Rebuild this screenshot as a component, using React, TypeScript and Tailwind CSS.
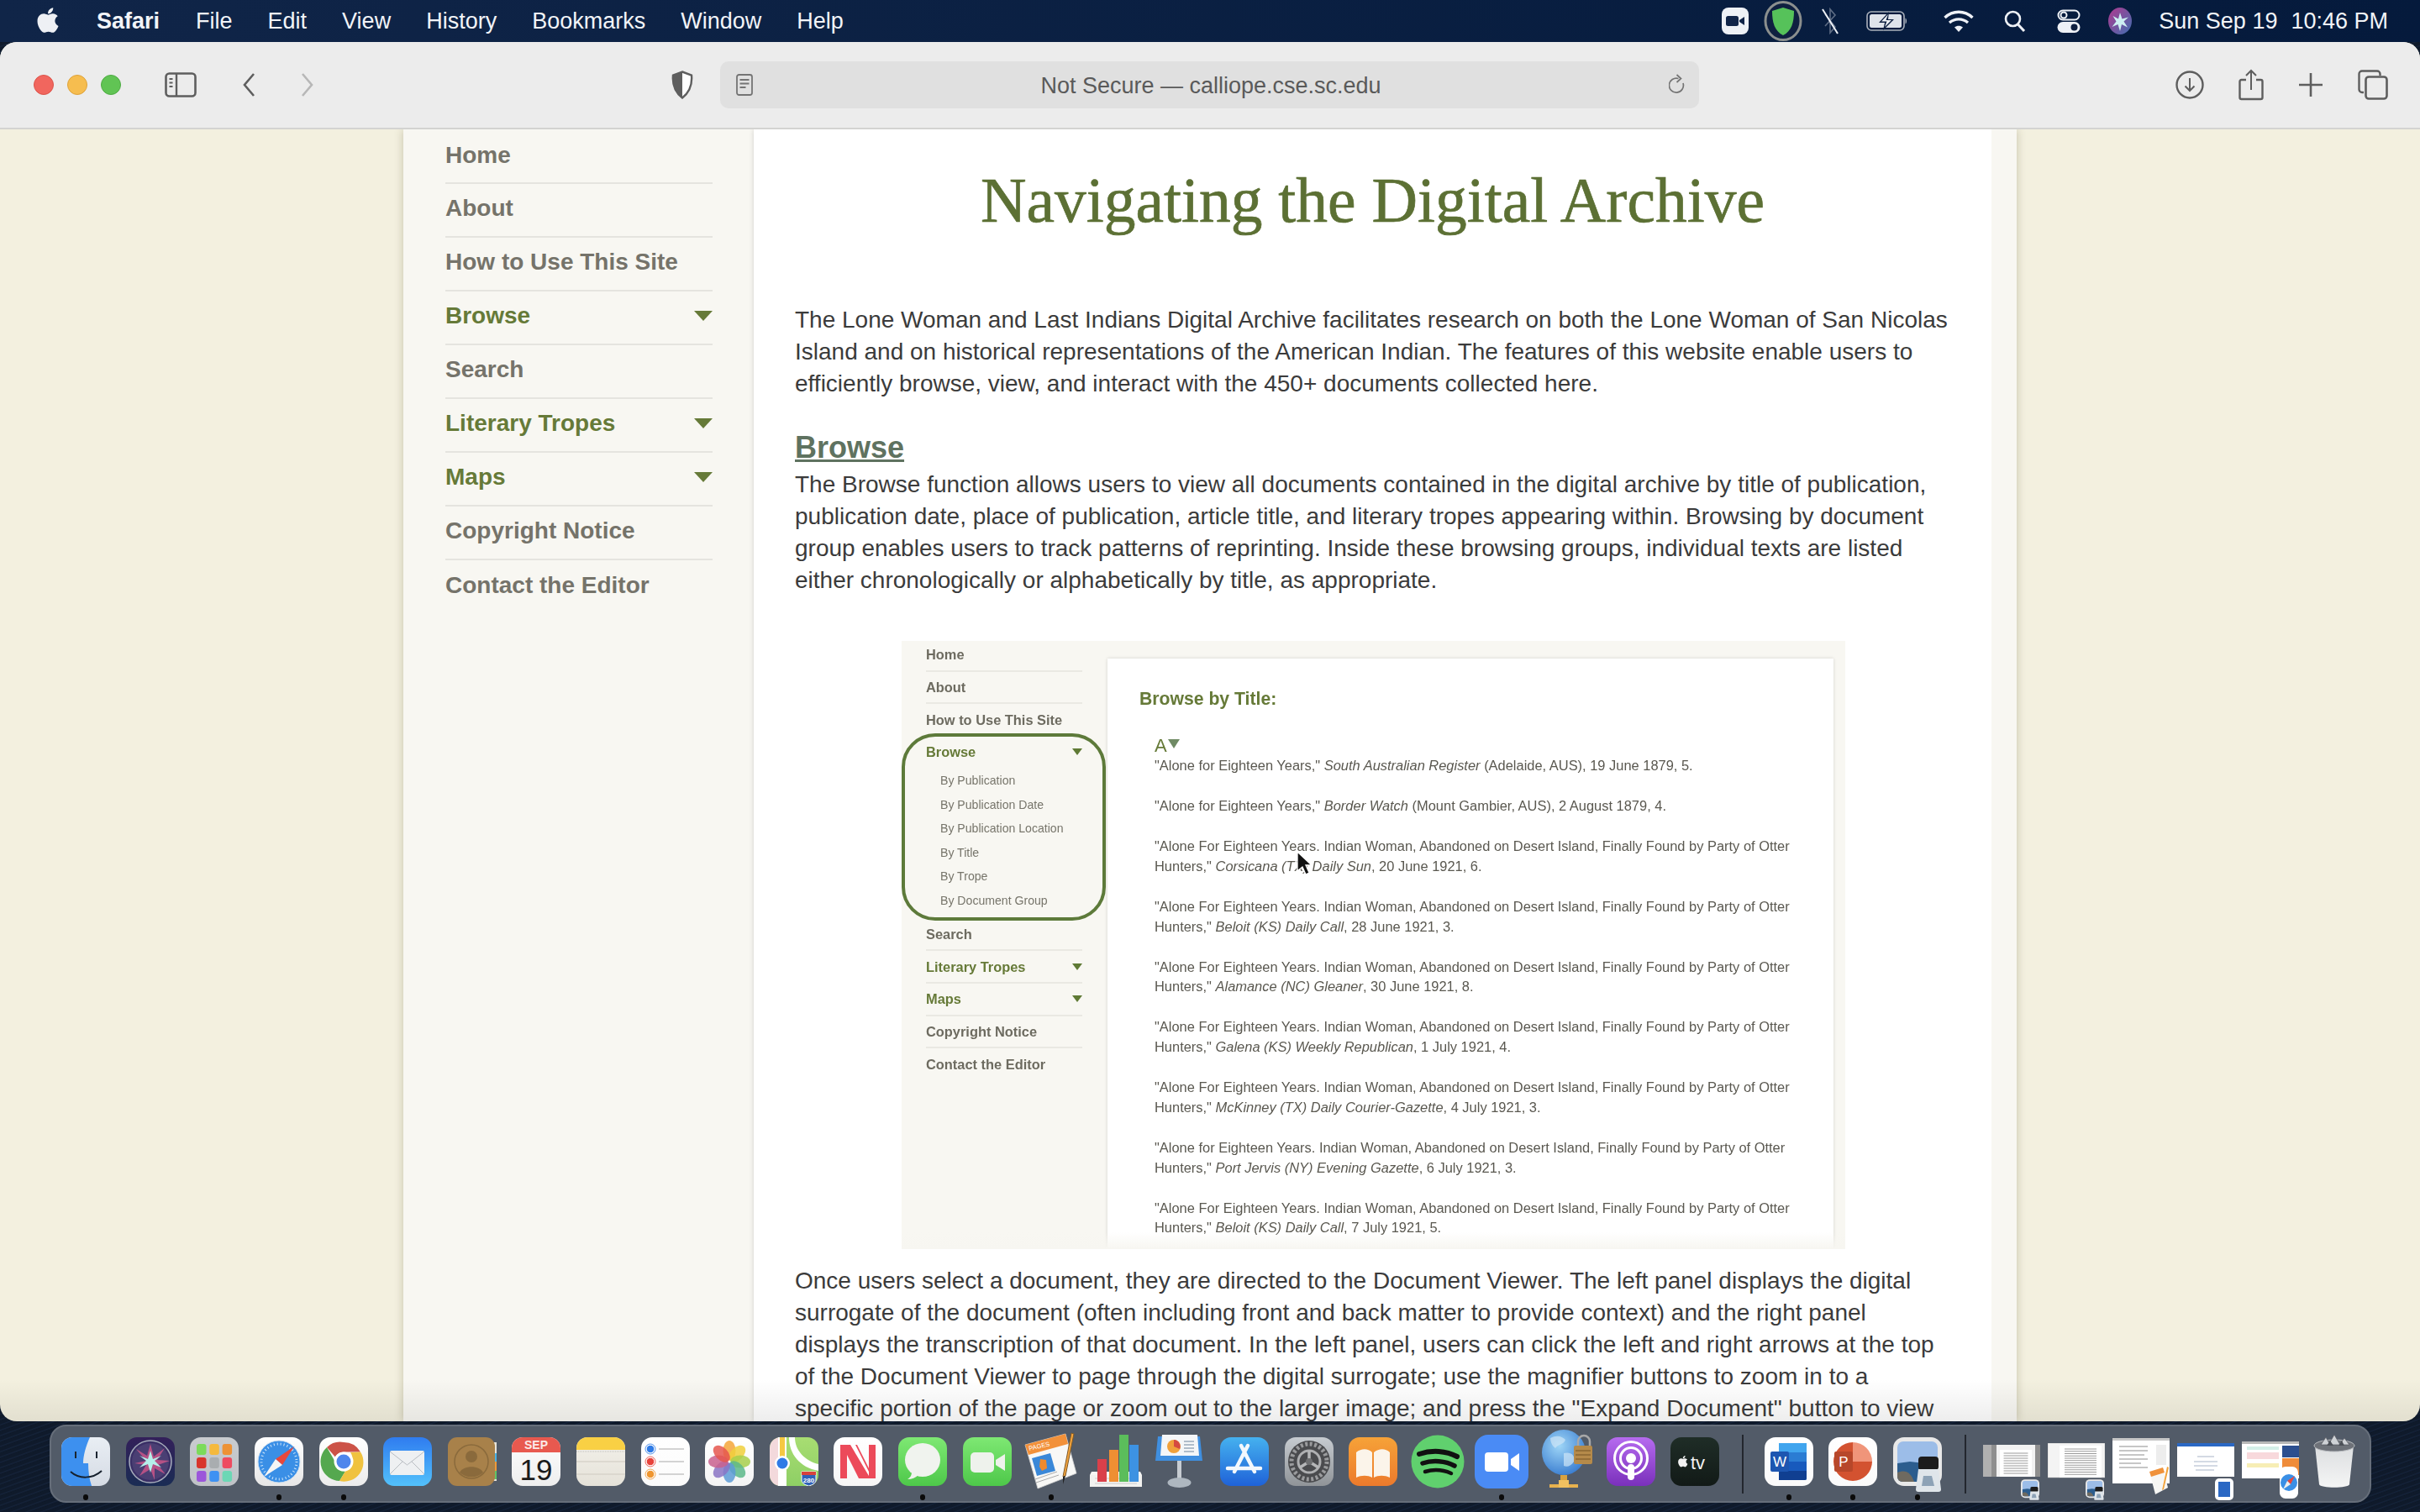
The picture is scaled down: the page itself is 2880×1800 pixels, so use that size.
import { ReactNode } from "react";
import { FaApple } from "react-icons/fa";

const MENU_ITEMS = ["File", "Edit", "View", "History", "Bookmarks", "Window", "Help"];

const NAV_ITEMS = [
  { label: "Home" },
  { label: "About" },
  { label: "How to Use This Site" },
  { label: "Browse", open: true },
  { label: "Search" },
  { label: "Literary Tropes", open: true },
  { label: "Maps", open: true },
  { label: "Copyright Notice" },
  { label: "Contact the Editor" },
];

const SUB_ITEMS = ["By Publication", "By Publication Date", "By Publication Location", "By Title", "By Trope", "By Document Group"];

const SHOT_ITEMS: { a: string; title: string; b: string; one?: boolean }[] = [
  { a: '"Alone for Eighteen Years,"', title: "South Australian Register", b: "(Adelaide, AUS), 19 June 1879, 5.", one: true },
  { a: '"Alone for Eighteen Years,"', title: "Border Watch", b: "(Mount Gambier, AUS), 2 August 1879, 4.", one: true },
  { a: '"Alone For Eighteen Years. Indian Woman, Abandoned on Desert Island, Finally Found by Party of Otter', title: "Corsicana (TX) Daily Sun", b: ", 20 June 1921, 6." },
  { a: '"Alone For Eighteen Years. Indian Woman, Abandoned on Desert Island, Finally Found by Party of Otter', title: "Beloit (KS) Daily Call", b: ", 28 June 1921, 3." },
  { a: '"Alone For Eighteen Years. Indian Woman, Abandoned on Desert Island, Finally Found by Party of Otter', title: "Alamance (NC) Gleaner", b: ", 30 June 1921, 8." },
  { a: '"Alone For Eighteen Years. Indian Woman, Abandoned on Desert Island, Finally Found by Party of Otter', title: "Galena (KS) Weekly Republican", b: ", 1 July 1921, 4." },
  { a: '"Alone For Eighteen Years. Indian Woman, Abandoned on Desert Island, Finally Found by Party of Otter', title: "McKinney (TX) Daily Courier-Gazette", b: ", 4 July 1921, 3." },
  { a: '"Alone for Eighteen Years. Indian Woman, Abandoned on Desert Island, Finally Found by Party of Otter', title: "Port Jervis (NY) Evening Gazette", b: ", 6 July 1921, 3." },
  { a: '"Alone For Eighteen Years. Indian Woman, Abandoned on Desert Island, Finally Found by Party of Otter', title: "Beloit (KS) Daily Call", b: ", 7 July 1921, 5." },
];

const Ico = ({ w, h, vb, className, children }: { w: number; h: number; vb?: string; className?: string; children: ReactNode }) => (
  <svg width={w} height={h} viewBox={vb ?? `0 0 ${w} ${h}`} fill="none" className={`shrink-0 ${className ?? ""}`}>
    {children}
  </svg>
);

const StatusIcons = () => (
  <div className="flex items-center h-full">
    {/* zoom */}
    <Ico w={32} h={32}>
      <rect width="32" height="32" rx="8" fill="#eef1f6" />
      <rect x="5" y="10" width="15" height="12" rx="2.5" fill="#102448" />
      <path d="M21 15l6-4v10l-6-4z" fill="#102448" />
    </Ico>
    {/* green shield */}
    <Ico w={46} h={48} className="ml-[18px]">
      <ellipse cx="23" cy="24" rx="21" ry="22.5" fill="#0f2040" stroke="#8b8f8e" strokeWidth="3" />
      <path d="M23 8l13 4c0 14-3 24-13 29C13 36 10 26 10 12z" fill="#56c25a" />
    </Ico>
    {/* bluetooth off */}
    <Ico w={24} h={34} className="ml-[21px]">
      <path d="M6 9l12 15-6 7V3l6 7-12 13" stroke="#5f6d85" strokeWidth="1.6" />
      <path d="M3 3l18 29" stroke="#eef1f6" strokeWidth="2" />
    </Ico>
    {/* battery */}
    <Ico w={50} h={24} className="ml-[31px]">
      <rect x="1" y="1" width="44" height="22" rx="5" stroke="#aab0bb" strokeWidth="1.6" />
      <rect x="4" y="4" width="38" height="16" rx="2.5" fill="#dfe3ea" />
      <path d="M46.500 8.500c2 1 2 6 0 7z" fill="#aab0bb" />
      <path d="M27 1L15 14h7l-2 9 13-13h-7z" fill="#0f2040" />
      <path d="M26 4l-8 8.500h6.500L22 19l8-8h-6.500z" fill="#eef1f6" />
    </Ico>
    {/* wifi */}
    <Ico w={36} h={26} className="ml-[42px]">
      <path d="M1.500 9C11 0 25 0 34.500 9" stroke="#eef1f6" strokeWidth="3.4" />
      <path d="M7 15c6.500-5.500 15.500-5.500 22 0" stroke="#eef1f6" strokeWidth="3.4" />
      <path d="M13 20.500c3-2.500 7-2.500 10 0L18 26z" fill="#eef1f6" />
    </Ico>
    {/* search */}
    <Ico w={26} h={26} className="ml-[36px]">
      <circle cx="10.500" cy="10.500" r="8.500" stroke="#eef1f6" strokeWidth="2.6" />
      <path d="M16.500 17l7.500 8" stroke="#eef1f6" strokeWidth="3" />
    </Ico>
    {/* control center */}
    <Ico w={28} h={28} className="ml-[37px]">
      <rect x="1.500" y="1.500" width="25" height="11" rx="5.500" stroke="#eef1f6" strokeWidth="2" />
      <circle cx="8" cy="7" r="3.500" stroke="#eef1f6" strokeWidth="2" />
      <rect x="0.500" y="15" width="27" height="13" rx="6.500" fill="#eef1f6" />
      <circle cx="20.500" cy="21.500" r="4" fill="#0f2040" />
    </Ico>
    {/* siri */}
    <Ico w={28} h={34} vb="0 -3 28 34" className="ml-[33px]">
      <defs>
        <linearGradient id="siriTop" x1="0" y1="0" x2="1" y2="1">
          <stop offset="0" stopColor="#b0398f" />
          <stop offset="1" stopColor="#3f6fb0" />
        </linearGradient>
      </defs>
      <ellipse cx="14" cy="14" rx="14" ry="16" fill="url(#siriTop)" />
      <path d="M14 4l2.500 7.500 7.500-2-5.500 5 4.500 7-7-3.500L14 26l-2.500-8-7 3 5-6.500-4-6.500 6.500 3.500z" fill="#cdeff2" />
    </Ico>
    <span className="ml-[32px] text-[#f2f4f8] text-[27px]">Sun Sep 19</span>
    <span className="ml-[16px] text-[#f2f4f8] text-[27px]">10:46 PM</span>
  </div>
);

const MenuBar = () => (
  <div className="h-[50px] shrink-0 flex items-center justify-between bg-gradient-to-r from-[#102548] to-[#051a3c] pl-[42px] pr-[38px]">
    <div className="flex items-center">
      <FaApple className="text-[#eef0f4] w-[30px] h-[34px] mb-[3px]" />
      <span className="ml-[43px] text-[#f2f4f8] text-[27px] font-bold">Safari</span>
      <div className="ml-[43px] flex gap-[42px] text-[#f2f4f8] text-[27px]">
        {MENU_ITEMS.map((m) => (
          <span key={m}>{m}</span>
        ))}
      </div>
    </div>
    <StatusIcons />
  </div>
);

const Toolbar = () => (
  <div className="h-[104px] shrink-0 flex items-center bg-[#ececec] border-b-2 border-[#d3d3d1] pl-[40px] pr-[38px]">
    <div className="flex gap-[16px]">
      <div className="w-[24px] h-[24px] rounded-full bg-[#f1665e] border border-[#dc5249]" />
      <div className="w-[24px] h-[24px] rounded-full bg-[#f6bd4f] border border-[#dea23a]" />
      <div className="w-[24px] h-[24px] rounded-full bg-[#61c454] border border-[#4dab42]" />
    </div>
    <Ico w={38} h={30} className="ml-[52px]">
      <rect x="1.500" y="1.500" width="35" height="27" rx="4" stroke="#5e5e5e" strokeWidth="2.600" />
      <path d="M14 2v26" stroke="#5e5e5e" strokeWidth="2.400" />
      <path d="M5.500 8h4M5.500 12.500h4M5.500 17h4" stroke="#5e5e5e" strokeWidth="2" />
    </Ico>
    <Ico w={16} h={30} className="ml-[54px]">
      <path d="M14 2L3 15l11 13" stroke="#5e5e5e" strokeWidth="2.600" />
    </Ico>
    <Ico w={16} h={30} className="ml-[54px]">
      <path d="M2 2l11 13L2 28" stroke="#b7b7b7" strokeWidth="2.600" />
    </Ico>
    <Ico w={26} h={34} className="ml-[425px]">
      <path d="M13 1.500l11 4c1 11-2 20-11 27C4 25.500 1 16.500 2 5.500z" fill="#fff" stroke="#5e5e5e" strokeWidth="2.400" />
      <path d="M13 1.500L2 5.500C1 16.500 4 25.500 13 32.500z" fill="#5e5e5e" />
    </Ico>
    <div className="ml-[32px] w-[1166px] h-[56px] rounded-[10px] bg-[#e0e0e0] flex items-center pl-[19px] pr-[14px]">
      <Ico w={20} h={26}>
        <rect x="1" y="1" width="18" height="24" rx="2.500" stroke="#747474" strokeWidth="1.800" />
        <path d="M4.500 7h11M4.500 11.500h11M4.500 16h7" stroke="#747474" strokeWidth="2" />
      </Ico>
      <span className="flex-1 text-center text-[27px] pt-[2px] text-[#5a5a5a]">Not Secure — calliope.cse.sc.edu</span>
      <Ico w={22} h={26}>
        <path d="M17 11a8.500 8.500 0 1 1-5.500-5.500" stroke="#747474" strokeWidth="1.700" />
        <path d="M9.500 1l5 4.500-5 4.500" stroke="#747474" strokeWidth="1.700" />
      </Ico>
    </div>
    <Ico w={34} h={34} className="ml-[567px]">
      <circle cx="17" cy="17" r="15.500" stroke="#5e5e5e" strokeWidth="2.400" />
      <path d="M17 9v15M11.500 18.500L17 24l5.500-5.500" stroke="#5e5e5e" strokeWidth="2" />
    </Ico>
    <Ico w={30} h={38} className="ml-[41px]">
      <path d="M9 13H3.500a2 2 0 0 0-2 2v19a2 2 0 0 0 2 2h23a2 2 0 0 0 2-2V15a2 2 0 0 0-2-2H21" stroke="#5e5e5e" strokeWidth="2.400" />
      <path d="M15 25V2M9 8l6-6 6 6" stroke="#5e5e5e" strokeWidth="2" />
    </Ico>
    <Ico w={28} h={28} className="ml-[42px]">
      <path d="M14 0v28M0 14h28" stroke="#5e5e5e" strokeWidth="2.600" />
    </Ico>
    <Ico w={36} h={36} className="ml-[42px]">
      <path d="M7 27H5a3.500 3.500 0 0 1-3.500-3.500V5A3.500 3.500 0 0 1 5 1.500h18A3.500 3.500 0 0 1 26.500 5v2" stroke="#5e5e5e" strokeWidth="2.400" />
      <rect x="9.500" y="8.500" width="25" height="26" rx="3.500" stroke="#5e5e5e" strokeWidth="2.600" />
    </Ico>
  </div>
);

const NavArrow = ({ large }: { large?: boolean }) =>
  large ? (
    <Ico w={22} h={12}>
      <path d="M0 0h22L11 12z" fill="#667a38" />
    </Ico>
  ) : (
    <Ico w={12} h={8}>
      <path d="M0 0h12L6 8z" fill="#5f7a35" />
    </Ico>
  );

const Sidebar = () => (
  <aside className="w-[417px] shrink-0 bg-[#f8f7f2] pl-[50px] pt-[3px]">
    <ul className="w-[318px]">
      {NAV_ITEMS.map((item, i) => (
        <li
          key={item.label}
          className={`h-[64px] flex items-center justify-between pb-[4px] first:h-[62px] text-[28px] font-bold ${
            i < NAV_ITEMS.length - 1 ? "border-b-2 border-[#e5e4df]" : ""
          } ${item.open ? "text-[#667a38]" : "text-[#75736a]"}`}
        >
          <span>{item.label}</span>
          {item.open && <NavArrow large />}
        </li>
      ))}
    </ul>
  </aside>
);

const ShotNavRow = ({ label, open, last, pull }: { label: string; open?: boolean; last?: boolean; pull?: boolean }) => (
  <div
    className={`h-[38.6px] flex items-center justify-between w-[186px] text-[16.400px] font-bold ${
      last ? "" : "border-b-2 border-[#eae9e3]"
    } ${pull ? "-mt-[2px]" : ""} ${open ? "text-[#667a38]" : "text-[#6d6b60]"}`}
  >
    <span>{label}</span>
    {open && <NavArrow />}
  </div>
);

const ArchiveShot = () => (
  <div className="relative mt-[53px] ml-[176px] w-[1123px] h-[724px] overflow-hidden bg-[#f8f7f2] flex [filter:blur(0.45px)]">
    <div className="w-[245px] shrink-0 pl-[29px] -mt-[2px]">
      <ShotNavRow label="Home" />
      <ShotNavRow label="About" />
      <ShotNavRow label="How to Use This Site" last />
      <div className="relative -ml-[29px] w-[243px] h-[223px] rounded-[40px] border-[4px] border-[#5d7a3a] pl-[25px] -mt-[4px]">
        <div className="h-[36px] mb-[2px] flex items-center justify-between w-[186px] text-[16.400px] font-bold text-[#667a38]">
          <span>Browse</span>
          <NavArrow />
        </div>
        {SUB_ITEMS.map((s) => (
          <div key={s} className="h-[28.600px] ml-[17px] flex items-center text-[14.100px] text-[#77756b]">
            {s}
          </div>
        ))}
      </div>
      <ShotNavRow label="Search" pull />
      <ShotNavRow label="Literary Tropes" open />
      <ShotNavRow label="Maps" open />
      <ShotNavRow label="Copyright Notice" />
      <ShotNavRow label="Contact the Editor" last />
    </div>
    <div className="mt-[21px] w-[864px] h-[720px] bg-white shadow-[0_0_4px_rgba(0,0,0,0.15)] pl-[38px] pt-[36px]">
      <div className="text-[21.200px] leading-[24px] font-bold text-[#667a38]">Browse by Title:</div>
      <div className="ml-[18px] mt-[32px]">
        <div className="text-[22px] leading-[24px] text-[#667a38] flex items-center">
          A
          <Ico w={14} h={11} className="mb-[6px] ml-[1px]">
            <path d="M0 0h14L7 11z" fill="#6f8a64" />
          </Ico>
        </div>
        {SHOT_ITEMS.map((it, i) => (
          <p key={i} className="text-[16.450px] leading-[23.800px] text-[#5a5850] whitespace-nowrap mb-[24.200px] first:mt-[4px]">
            {it.a}
            {it.one ? " " : <br />}
            {it.one ? null : 'Hunters," '}
            <em>{it.title}</em>
            {it.one ? " " : ""}
            {it.b}
          </p>
        ))}
      </div>
    </div>
    <Ico w={20} h={30} className="absolute left-[469px] top-[250px]">
      <path d="M2 1v23l6-5 4 9 4-2-4-9h7z" fill="#111" stroke="#fff" strokeWidth="1.300" />
    </Ico>
    <div className="absolute left-0 right-0 bottom-0 h-[20px] bg-gradient-to-b from-transparent to-[#f7f6f1]" />
  </div>
);

const MainPanel = () => (
  <main className="w-[1473px] shrink-0 bg-white shadow-[0_0_6px_rgba(0,0,0,0.16)] text-[#3b3b3b] text-[28px] leading-[38px]">
    <h1 className="pt-[45px] text-center [font-family:'Liberation_Serif',Georgia,serif] text-[75.500px] leading-[80px] text-[#5c7034] [-webkit-text-stroke:0.7px_#5c7034]">
      Navigating the Digital Archive
    </h1>
    <div className="pl-[49px]">
      <p className="mt-[83px] whitespace-nowrap">
        The Lone Woman and Last Indians Digital Archive facilitates research on both the Lone Woman of San Nicolas
        <br />
        Island and on historical representations of the American Indian. The features of this website enable users to
        <br />
        efficiently browse, view, and interact with the 450+ documents collected here.
      </p>
      <h2 className="mt-[35px] text-[36px] leading-[44px] font-bold underline text-[#5f7260]">Browse</h2>
      <p className="mt-[3px] whitespace-nowrap">
        The Browse function allows users to view all documents contained in the digital archive by title of publication,
        <br />
        publication date, place of publication, article title, and literary tropes appearing within. Browsing by document
        <br />
        group enables users to track patterns of reprinting. Inside these browsing groups, individual texts are listed
        <br />
        either chronologically or alphabetically by title, as appropriate.
      </p>
    </div>
    <ArchiveShot />
    <div className="pl-[49px]">
      <p className="mt-[19px] whitespace-nowrap">
        Once users select a document, they are directed to the Document Viewer. The left panel displays the digital
        <br />
        surrogate of the document (often including front and back matter to provide context) and the right panel
        <br />
        displays the transcription of that document. In the left panel, users can click the left and right arrows at the top
        <br />
        of the Document Viewer to page through the digital surrogate; use the magnifier buttons to zoom in to a
        <br />
        specific portion of the page or zoom out to the larger image; and press the "Expand Document" button to view
      </p>
    </div>
  </main>
);

/* dock art */
const Tile = ({ id, from, to, size = 58, r = 13, children }: { id: string; from: string; to: string; size?: number; r?: number; children?: ReactNode }) => (
  <Ico w={size} h={size} vb="0 0 58 58">
    <defs>
      <linearGradient id={id} x1="0" y1="0" x2="0" y2="1">
        <stop offset="0" stopColor={from} />
        <stop offset="1" stopColor={to} />
      </linearGradient>
    </defs>
    <rect width="58" height="58" rx={r} fill={`url(#${id})`} />
    {children}
  </Ico>
);

const PETALS = ["#f4a63a", "#f0cf3c", "#a8cf4b", "#5cb98a", "#5d9bd6", "#8a74c4", "#c9608e", "#e5564e"];

const Finder = () => (
  <Tile id="fd" from="#e9eef4" to="#d5dbe4">
    <path d="M13 0h21c-5 11-8 22-8 31h6c0 9 1 18 4 27H13A13 13 0 0 1 0 45V13A13 13 0 0 1 13 0z" fill="#3d90ef" />
    <path d="M17 17v8M42 17v8" stroke="#1b2530" strokeWidth="2" />
    <path d="M11 41c10 9 26 9 37-1" stroke="#16202c" strokeWidth="2" />
  </Tile>
);
const Siri = () => (
  <Tile id="si" from="#33205a" to="#1a2c54">
    <circle cx="29" cy="29" r="25" fill="#3a2f66" stroke="#a7adbc" strokeWidth="1.500" />
    <circle cx="29" cy="29" r="22" fill="#4a3f73" />
    <path d="M29 8l4 15 13-10-9 14 15 1-14 5 9 11-13-7 0 14-5-13-13 8 8-13-14-2 14-3L12 14l13 8z" fill="#d0568a" opacity="0.8" />
    <path d="M29 16l3 10 10-4-8 6 8 8-10-4-3 10-3-10-10 4 8-8-8-6 10 4z" fill="#b5f0ea" />
  </Tile>
);
const LAUNCH = ["#7cdb5a", "#f5b93d", "#ed9236", "#d8342b", "#a9adb0", "#ee4b60", "#9b56da", "#3e91f2", "#6cd7b5"];
const Launchpad = () => (
  <Tile id="lp" from="#c8cbcf" to="#bfc2c7">
    {LAUNCH.map((c, i) => (
      <rect key={i} x={8 + (i % 3) * 15.300} y={8 + Math.floor(i / 3) * 16} width="11.500" height="13" rx="3" fill={c} />
    ))}
  </Tile>
);
const Safari = () => (
  <Tile id="sf" from="#ffffff" to="#e6e6e6">
    <circle cx="29" cy="29" r="25" fill="#3a8fe6" stroke="#cfe0f0" strokeWidth="1" />
    <circle cx="29" cy="29" r="21" stroke="#cfe6fa" strokeWidth="3" strokeDasharray="1 3" />
    <path d="M47 11L25 26l8 7z" fill="#e8473c" />
    <path d="M11 47l14-21 8 7z" fill="#f5f5f5" />
  </Tile>
);
const Chrome = () => (
  <Tile id="cr" from="#ffffff" to="#ececec">
    <path d="M29 6a23 23 0 0 1 20 11.500H29a11.500 11.500 0 0 0-10 6L9 12A23 23 0 0 1 29 6z" fill="#cc5247" />
    <path d="M9 12l10 17.500A11.500 11.500 0 0 0 31 40.500L24 52A23 23 0 0 1 9 12z" fill="#55a84f" />
    <path d="M49 17.500A23 23 0 0 1 24 52l11-18A11.500 11.500 0 0 0 37 18z" fill="#f0c23f" />
    <circle cx="29" cy="29" r="11.500" fill="#fff" />
    <circle cx="29" cy="29" r="8.500" fill="#4f86ec" />
  </Tile>
);
const Mail = () => (
  <Tile id="ml" from="#2f7cf0" to="#53c1fb">
    <rect x="8" y="16" width="41" height="29" rx="2" fill="#eef0f2" />
    <path d="M8 17l20.500 16L49 17M8 44l15-15M49 44L34 29" stroke="#b9bdc2" strokeWidth="1" />
  </Tile>
);
const Contacts = () => (
  <Ico w={58} h={58}>
    <path d="M54 6h4v46h-4z" fill="#e8e4da" />
    <rect x="54" y="19" width="4" height="10" fill="#4ab4e8" />
    <rect x="54" y="29" width="4" height="11" fill="#ef9a3a" />
    <rect x="54" y="40" width="4" height="10" fill="#62c466" />
    <rect width="56" height="58" rx="11" fill="#a8814a" />
    <circle cx="28" cy="29" r="20" stroke="#8a6a3c" strokeWidth="1.500" />
    <circle cx="28" cy="23" r="7" fill="#8a6a3c" />
    <path d="M14 42c4-9 24-9 28 0-8 7-20 7-28 0z" fill="#8a6a3c" />
  </Ico>
);
const Calendar = () => (
  <Tile id="cl" from="#fdfdfd" to="#eeeeee">
    <path d="M13 0h32a13 13 0 0 1 13 13v5H0v-5A13 13 0 0 1 13 0z" fill="#e8594f" />
    <text x="29" y="14" textAnchor="middle" fontSize="14" fontWeight="700" fill="#fbe9e6" className="[font-family:'Liberation_Sans',sans-serif]">SEP</text>
    <text x="29" y="51" textAnchor="middle" fontSize="35" fill="#1b1b1b" className="[font-family:'Liberation_Sans',sans-serif]">19</text>
  </Tile>
);
const Notes = () => (
  <Tile id="nt" from="#f3f1ea" to="#e5e2d9">
    <path d="M13 0h32a13 13 0 0 1 13 13v2H0v-2A13 13 0 0 1 13 0z" fill="#f9d044" />
    <path d="M0 17h58" stroke="#bbb" strokeWidth="1" strokeDasharray="1 1" />
    <path d="M0 29h58M0 44h58" stroke="#d7d4ca" strokeWidth="1.500" />
  </Tile>
);
const Reminders = () => (
  <Tile id="rm" from="#ffffff" to="#fbfbfb">
    {[
      ["#2f7be6", 14],
      ["#e8423a", 29],
      ["#ef9630", 44],
    ].map(([c, y]) => (
      <g key={c as string}>
        <circle cx="11" cy={y as number} r="4.800" fill={c as string} stroke="#fff" strokeWidth="1" />
        <circle cx="11" cy={y as number} r="6" stroke={c as string} strokeWidth="0.800" />
        <path d={`M21 ${y}h30`} stroke="#bdbdbd" strokeWidth="1.300" />
      </g>
    ))}
  </Tile>
);
const Photos = () => (
  <Tile id="ph" from="#ffffff" to="#f4f4f4">
    {PETALS.map((c, i) => (
      <ellipse key={c} cx="29" cy="16" rx="7.500" ry="12" fill={c} opacity="0.85" transform={`rotate(${i * 45} 29 29)`} />
    ))}
    <circle cx="29" cy="29" r="1.500" fill="#fff" />
  </Tile>
);
const Maps = () => (
  <Tile id="mp" from="#a8dd72" to="#8ecf65">
    <path d="M0 13A13 13 0 0 1 13 0h7v58h-7A13 13 0 0 1 0 45z" fill="#f3d9dc" />
    <path d="M10 0h10v58H10z" fill="#fff" />
    <path d="M12 0h6v25h-6z" fill="#f5c842" />
    <path d="M30 0c0 16 12 28 28 32v8C36 36 23 20 23 0z" fill="#fff" />
    <circle cx="15" cy="31" r="9" fill="#fff" />
    <circle cx="15" cy="31" r="6.500" fill="#2f7be6" />
    <path d="M38 41h17v10c0 4-5 6-8.500 7-3.500-1-8.500-3-8.500-7z" fill="#2f62b8" stroke="#fff" strokeWidth="1" />
    <path d="M38 41h17v4H38z" fill="#d8433c" />
    <text x="46.500" y="54" textAnchor="middle" fontSize="8" fontWeight="700" fill="#fff" className="[font-family:'Liberation_Sans',sans-serif]">280</text>
  </Tile>
);
const News = () => (
  <Tile id="nw" from="#ffffff" to="#f6f6f6">
    <path d="M8 9h8v40H8zM42 9h8v40h-8z" fill="#ec4a5a" />
    <path d="M16 9h12l14 28v12H30L16 21z" fill="#ec4a5a" />
    <path d="M20 9h6l16 32v5z" fill="#fff" />
  </Tile>
);
const Messages = () => (
  <Tile id="ms" from="#7ee873" to="#4ec84a">
    <ellipse cx="29" cy="27" rx="21" ry="20" fill="#f0f3ee" />
    <path d="M16 41c0 5-2 7-5 9 5 0 10-2 13-5z" fill="#f0f3ee" />
  </Tile>
);
const FaceTime = () => (
  <Tile id="ft" from="#7ee873" to="#4ec84a">
    <rect x="9" y="18" width="28" height="24" rx="5" fill="#eef2ec" />
    <path d="M39 27l11-7v20l-11-7z" fill="#eef2ec" />
  </Tile>
);
const Pages = () => (
  <Ico w={66} h={70} className="-mt-[6px]">
    <path d="M2 15L50 2l13 47-46 18z" fill="#f8f8f6" stroke="#cfcfcf" strokeWidth="0.800" />
    <path d="M2 15L50 2l3 12L6 27z" fill="#f2913a" />
    <text x="7" y="22" fontSize="7.500" fill="#fff" transform="rotate(-13 7 22)" className="[font-family:'Liberation_Sans',sans-serif]">PAGES</text>
    <path d="M10 31l22-6 6 21-22 6z" fill="#3a88d8" />
    <path d="M20 32l7 1 1 10-6 3-3-5z" fill="#ef8a2e" />
    <path d="M14 56l26-9M15 60l27-9" stroke="#aaa" strokeWidth="1" />
    <path d="M57 1l3 1-10 50-3 1z" fill="#f2a33c" stroke="#7d5a2a" strokeWidth="1" />
    <path d="M47 53l3-1-3 10z" fill="#222" />
  </Ico>
);
const Numbers = () => (
  <Ico w={62} h={66} className="-mt-[5px]">
    <path d="M0 50l2-4h58l2 4v14H0z" fill="#f7f7f5" />
    <path d="M0 50h62v14H0z" fill="#f2f2f0" />
    <path d="M6 54h50M6 60h50" stroke="#cdcdcd" strokeWidth="1" />
    <rect x="9" y="31" width="11" height="27" fill="#d9404a" />
    <rect x="23" y="20" width="11" height="38" fill="#ef8f33" />
    <rect x="35" y="2" width="11" height="56" fill="#5bbd5b" />
    <rect x="47" y="14" width="11" height="44" fill="#3d92e2" />
  </Ico>
);
const Keynote = () => (
  <Ico w={58} h={68} className="-mt-[6px]">
    <path d="M3 5h50l3 29H0z" fill="#3f8fe0" />
    <path d="M8 3h42l2 25H6z" fill="#f4f6f8" />
    <circle cx="22" cy="17" r="8" fill="#f0a13c" />
    <path d="M22 17V9a8 8 0 0 1 7 11z" fill="#d54a42" />
    <path d="M34 11h12M34 15h12M34 19h12M34 23h12" stroke="#9ab" strokeWidth="1.500" />
    <rect x="26" y="34" width="5" height="24" fill="#c7ccd2" />
    <ellipse cx="28.500" cy="60" rx="14" ry="6" fill="#aeb7c0" />
  </Ico>
);
const AppStore = () => (
  <Tile id="as" from="#45b1ef" to="#1f62d8">
    <path d="M33 10L17 41M25 10l16 31" stroke="#f3f8fd" strokeWidth="4.500" strokeLinecap="round" />
    <path d="M9 37h39" stroke="#f3f8fd" strokeWidth="4.500" strokeLinecap="round" />
  </Tile>
);
const SystemPrefs = () => (
  <Tile id="sp" from="#c6cbd0" to="#909498">
    <circle cx="29" cy="29" r="25" fill="#4a4b4e" />
    <circle cx="29" cy="29" r="21" stroke="#9a9b9d" strokeWidth="5" strokeDasharray="3 2.500" />
    <circle cx="29" cy="29" r="13" stroke="#aeafb1" strokeWidth="3" />
    <path d="M29 29V16M29 29l11 7M29 29l-11 7" stroke="#b5b6b8" strokeWidth="3.500" />
    <circle cx="29" cy="29" r="4" fill="#6d6e70" />
  </Tile>
);
const Books = () => (
  <Tile id="bk" from="#f6a238" to="#ec7a2c">
    <path d="M9 18c6-5 14-5 19 0v30c-5-3-13-3-19 0z" fill="#fbf4ea" />
    <path d="M30 18c6-5 14-5 19 0v30c-6-3-14-3-19 0z" fill="#fbf4ea" />
  </Tile>
);
const Spotify = () => (
  <Ico w={64} h={64} className="-mt-[3px]">
    <circle cx="32" cy="32" r="31.500" fill="#60d06e" />
    <path d="M10 23c15-5 32-4 45 3" stroke="#111" strokeWidth="6" strokeLinecap="round" />
    <path d="M14 34c12-4 27-3 38 3" stroke="#111" strokeWidth="5.500" strokeLinecap="round" />
    <path d="M17 44c10-3 22-2 31 2" stroke="#111" strokeWidth="4.500" strokeLinecap="round" />
  </Ico>
);
const ZoomApp = () => (
  <Ico w={64} h={64} className="-mt-[3px]">
    <rect width="64" height="64" rx="16" fill="#4a8bf5" />
    <rect x="12" y="21" width="28" height="23" rx="4" fill="#fff" />
    <path d="M43 29l10-7v21l-10-7z" fill="#fff" />
  </Ico>
);
const Globe = () => (
  <Ico w={66} h={72} className="-mt-[9px]">
    <defs>
      <radialGradient id="gb" cx="0.400" cy="0.350" r="0.800">
        <stop offset="0" stopColor="#9fd6f7" />
        <stop offset="1" stopColor="#2a6fca" />
      </radialGradient>
    </defs>
    <ellipse cx="30" cy="27" rx="26" ry="27" fill="url(#gb)" />
    <path d="M14 10c8-4 14-2 18 2-2 6-9 5-12 10-3-2-6-7-6-12zM30 28c8-2 14 2 12 10-3 5-8 7-12 5z" fill="#cfe6f6" opacity="0.7" />
    <path d="M26 54h8v8h-8z" fill="#d9a23f" />
    <path d="M13 65h34v4H13z" fill="#e8b24e" />
    <path d="M24 60h12v9H24z" fill="#f0c060" />
    <path d="M50 20v-6a7 7 0 0 1 14 0v6" stroke="#a8a8a8" strokeWidth="2.500" transform="translate(-3 0)" />
    <rect x="42" y="19" width="22" height="22" rx="2" fill="#b58a4a" />
    <path d="M44 25h18M44 30h18M44 35h18" stroke="#8b6733" strokeWidth="1.500" />
  </Ico>
);
const Podcasts = () => (
  <Tile id="pc" from="#b66bef" to="#7a30bb">
    <circle cx="29" cy="25" r="19.500" stroke="#fff" strokeWidth="3" />
    <circle cx="29" cy="25" r="12.500" stroke="#fff" strokeWidth="3" />
    <circle cx="29" cy="25" r="6" fill="#fff" />
    <rect x="25" y="32" width="8" height="19" rx="4" fill="#fff" />
  </Tile>
);
const AppleTv = () => (
  <Tile id="tv" from="#1f2d27" to="#121a17">
    <g transform="translate(9 21) scale(0.030)" fill="#f2f2f2">
      <path d="M318.700 268.700c-.2-36.700 16.400-64.400 50-84.800-18.800-26.900-47.200-41.700-84.700-44.600-35.500-2.800-74.300 20.700-88.500 20.700-15 0-49.400-19.700-76.400-19.700C63.300 141.200 4 184.800 4 273.500q0 39.300 14.400 81.200c12.800 36.700 59 126.700 107.200 125.200 25.200-.6 43-17.900 75.800-17.900 31.800 0 48.300 17.900 76.400 17.900 48.600-.7 90.400-82.500 102.600-119.300-65.200-30.700-61.700-90-61.700-91.900zm-56.600-164.200c27.300-32.400 24.800-61.900 24-72.500-24.100 1.400-52 16.400-67.900 34.900-17.500 19.800-27.800 44.300-25.600 71.900 26.100 2 49.900-11.400 69.500-34.300z" />
    </g>
    <text x="24" y="38" fontSize="22" fill="#f2f2f2" className="[font-family:'Liberation_Sans',sans-serif]">tv</text>
  </Tile>
);
const Word = () => (
  <Tile id="wd" from="#ffffff" to="#fafafa">
    <path d="M17 7h31a2 2 0 0 1 2 2v40a2 2 0 0 1-2 2H17z" fill="#2b7cd3" />
    <path d="M17 7h33v11H17z" fill="#41a5ee" />
    <path d="M17 29h33v11H17z" fill="#185abd" />
    <path d="M17 40h33v9a2 2 0 0 1-2 2H17z" fill="#103f91" />
    <rect x="7" y="17" width="22" height="24" rx="2" fill="#1d56b1" />
    <text x="18" y="35" textAnchor="middle" fontSize="17" fill="#fff" className="[font-family:'Liberation_Sans',sans-serif]">W</text>
  </Tile>
);
const Ppt = () => (
  <Tile id="pp" from="#ffffff" to="#fafafa">
    <path d="M29 6a23 23 0 0 1 23 23H29z" fill="#f0957a" />
    <path d="M29 6a23 23 0 0 0 0 46 23 23 0 0 0 23-23H29z" fill="#d35230" />
    <rect x="7" y="17" width="22" height="24" rx="2" fill="#b7472a" />
    <text x="18" y="35" textAnchor="middle" fontSize="17" fill="#fff" className="[font-family:'Liberation_Sans',sans-serif]">P</text>
  </Tile>
);
const PreviewBadge = ({ size }: { size: number }) => (
  <Ico w={size} h={Math.round(size * 1.120)} vb="0 0 58 65">
    <rect width="58" height="58" rx="13" fill="#e8e8e8" />
    <rect x="5" y="5" width="48" height="48" rx="7" fill="#9cbde8" />
    <path d="M5 31l15-2 33 4v14a6 6 0 0 1-6 6H11a6 6 0 0 1-6-6z" fill="#2c5d8e" />
    <path d="M5 42c10-4 16 0 20 11H11a6 6 0 0 1-6-6z" fill="#6f6a60" />
    <rect x="30" y="23" width="24" height="16" rx="4" fill="#1c1c1c" />
    <path d="M30 38h24l3 24a3 3 0 0 1-3 3H30a3 3 0 0 1-3-3z" fill="#dfe5ea" />
    <path d="M36 46l10 0 3 12H34z" fill="#8da2b6" />
  </Ico>
);
const Doc = ({ x, y, w, h, rows = 14 }: { x: number; y: number; w: number; h: number; rows?: number }) => (
  <g>
    <rect x={x} y={y} width={w} height={h} fill="#fff" />
    {Array.from({ length: rows }).map((_, i) => (
      <path key={i} d={`M${x + w * 0.12} ${y + 4 + (i * (h - 5)) / rows}h${w * 0.76}`} stroke="#9a9a9a" strokeWidth="1" />
    ))}
  </g>
);
const Thumb = ({ children, badge, mt = 0 }: { children: ReactNode; badge: ReactNode; mt?: number }) => (
  <div className="relative w-[68px] h-[62px] shrink-0" style={{ marginTop: mt }}>
    <Ico w={68} h={62}>
      {children}
    </Ico>
    <div className="absolute right-[1px] bottom-[-6px] flex">{badge}</div>
  </div>
);
const WordBadge = () => (
  <div className="w-[22px] h-[26px] rounded-[5px] bg-white flex items-center justify-center">
    <div className="w-[14px] h-[18px] bg-[#2b68c4]" />
  </div>
);
const PagesBadge = () => (
  <Ico w={24} h={34} vb="0 0 24 34">
    <path d="M1 6l16-5 6 24-15 8z" fill="#f7f7f4" />
    <path d="M1 6l16-5 2 6L3 12z" fill="#f0923a" />
    <path d="M22 0l2 1-6 26-2 1z" fill="#f2a33c" />
  </Ico>
);
const SafariBadge = () => (
  <Ico w={22} h={38} vb="0 0 22 38">
    <rect width="22" height="38" rx="7" fill="#fff" />
    <circle cx="11" cy="19" r="10" fill="#3a8fe6" />
    <path d="M18 11l-9 6 4 4z" fill="#e8473c" />
    <path d="M4 27l5-10 4 4z" fill="#eee" />
  </Ico>
);

const Trash = () => (
  <Ico w={52} h={66}>
    <defs>
      <linearGradient id="trsh" x1="0" y1="0" x2="0" y2="1">
        <stop offset="0" stopColor="#dcdee0" />
        <stop offset="1" stopColor="#f4f5f5" />
      </linearGradient>
    </defs>
    <path d="M3 14l5 46c1 5 35 5 36 0l5-46z" fill="url(#trsh)" />
    <ellipse cx="26" cy="14" rx="24" ry="7" fill="#6e7279" stroke="#b9bcc0" strokeWidth="1" />
    <path d="M10 13l6-9 5 9zM19 13l7-12 7 12zM32 13l6-8 6 8z" fill="#cfd2d6" stroke="#55585e" strokeWidth="0.700" />
    <path d="M21 8l4 6h-8zM35 8l3 6h-7z" fill="#4c5057" />
  </Ico>
);

const DOCK_APPS = [
  { key: "finder", Icon: Finder, on: true },
  { key: "siri", Icon: Siri },
  { key: "launchpad", Icon: Launchpad },
  { key: "safari", Icon: Safari, on: true },
  { key: "chrome", Icon: Chrome, on: true },
  { key: "mail", Icon: Mail },
  { key: "contacts", Icon: Contacts },
  { key: "calendar", Icon: Calendar },
  { key: "notes", Icon: Notes },
  { key: "reminders", Icon: Reminders },
  { key: "photos", Icon: Photos },
  { key: "maps", Icon: Maps },
  { key: "news", Icon: News },
  { key: "messages", Icon: Messages, on: true },
  { key: "facetime", Icon: FaceTime },
  { key: "pages", Icon: Pages, on: true },
  { key: "numbers", Icon: Numbers },
  { key: "keynote", Icon: Keynote },
  { key: "appstore", Icon: AppStore },
  { key: "prefs", Icon: SystemPrefs },
  { key: "books", Icon: Books },
  { key: "spotify", Icon: Spotify },
  { key: "zoom", Icon: ZoomApp, on: true },
  { key: "globe", Icon: Globe },
  { key: "podcasts", Icon: Podcasts },
  { key: "tv", Icon: AppleTv },
];

const DockSlot = ({ children, on }: { children: ReactNode; on?: boolean }) => (
  <div className="w-[76.600px] shrink-0 flex flex-col items-center pt-[13px]">
    <div className="h-[58px] flex items-start justify-center">{children}</div>
    {on && <div className="mt-[10px] w-[6px] h-[7px] rounded-full bg-[#0b0b0b]" />}
  </div>
);

const Dock = () => (
  <div className="mt-[4px] ml-[59px] w-[2763px] h-[93px] shrink-0 rounded-[20px] bg-[#525b68] border-[2px] border-[#666e7a] flex pl-[3px] box-border">
    {DOCK_APPS.map(({ key, Icon, on }) => (
      <DockSlot key={key} on={on}>
        <Icon />
      </DockSlot>
    ))}
    <div className="ml-[18px] mt-[10px] w-[2px] h-[70px] bg-[#23272e]" />
    <div className="ml-[15px] flex">
      <DockSlot on>
        <Word />
      </DockSlot>
      <DockSlot on>
        <Ppt />
      </DockSlot>
      <DockSlot on>
        <PreviewBadge size={58} />
      </DockSlot>
    </div>
    <div className="ml-[18px] mt-[10px] w-[2px] h-[70px] bg-[#23272e]" />
    <div className="ml-[20px] flex gap-[9px] pt-[20px] h-[62px]">
      <Thumb badge={<PreviewBadge size={22} />}>
        <rect x="0" y="2" width="68" height="38" fill="#f2f2f2" />
        <rect x="0" y="2" width="10" height="38" fill="#b0b0b0" />
        <rect x="10" y="2" width="6" height="38" fill="#8f8f8f" />
        <rect x="62" y="2" width="6" height="38" fill="#8f8f8f" />
        <Doc x={20} y={8} w={38} h={32} rows={9} />
      </Thumb>
      <Thumb badge={<PreviewBadge size={22} />}>
        <rect x="0" y="0" width="68" height="41" fill="#f4f4f4" stroke="#bbb" strokeWidth="0.500" />
        <Doc x={14} y={3} w={50} h={38} rows={12} />
      </Thumb>
      <Thumb badge={<PagesBadge />} mt={-6}>
        <rect x="0" y="0" width="68" height="54" fill="#fff" />
        <rect x="0" y="0" width="68" height="3" fill="#c7c7c7" />
        <path d="M8 10h34M8 15h34M8 20h30M8 25h34M8 30h26M8 35h34" stroke="#8d8d8d" strokeWidth="1" />
        <path d="M52 8h12v24H52z" fill="#ededed" />
      </Thumb>
      <Thumb badge={<WordBadge />}>
        <rect x="0" y="0" width="68" height="40" fill="#fff" />
        <rect x="0" y="0" width="68" height="4" fill="#2b68c4" />
        <path d="M24 16h20M20 22h28M20 27h28M22 32h22" stroke="#a8b4c8" strokeWidth="1" />
      </Thumb>
      <Thumb badge={<SafariBadge />} mt={-2}>
        <rect x="0" y="0" width="68" height="44" fill="#fff" />
        <rect x="0" y="0" width="68" height="3" fill="#b8b8b8" />
        <rect x="6" y="6" width="38" height="4" fill="#d4efe8" />
        <rect x="6" y="13" width="38" height="8" fill="#f8d9dc" />
        <rect x="6" y="26" width="38" height="5" fill="#f7eeb5" />
        <rect x="48" y="5" width="20" height="14" fill="#2c4f8f" />
        <rect x="48" y="20" width="20" height="20" fill="#ef8c3a" />
      </Thumb>
    </div>
    <div className="ml-[16px] pt-[9px]">
      <Trash />
    </div>
  </div>
);

export default function App() {
  return (
    <div className="w-[2880px] h-[1800px] flex flex-col overflow-hidden bg-[#0f1a2b] bg-[repeating-linear-gradient(160deg,#0f1a2b_0px,#0f1a2b_3px,#15233a_4px,#0d1726_6px)] [font-family:'Liberation_Sans',Arial,sans-serif]">
      <MenuBar />
      <div className="relative h-[1642px] shrink-0 flex flex-col overflow-hidden rounded-[20px] bg-[#f3f0df]">
        <Toolbar />
        <div className="flex-1 min-h-0 flex justify-center overflow-hidden">
          <div className="w-[1920px] flex shadow-[0_0_10px_rgba(90,85,50,0.3)]">
            <Sidebar />
            <MainPanel />
            <div className="w-[30px] bg-[#f8f7f2]" />
          </div>
        </div>
        <div className="absolute left-0 right-0 bottom-0 h-[50px] bg-gradient-to-b from-transparent to-black/[0.07]" />
      </div>
      <Dock />
    </div>
  );
}
